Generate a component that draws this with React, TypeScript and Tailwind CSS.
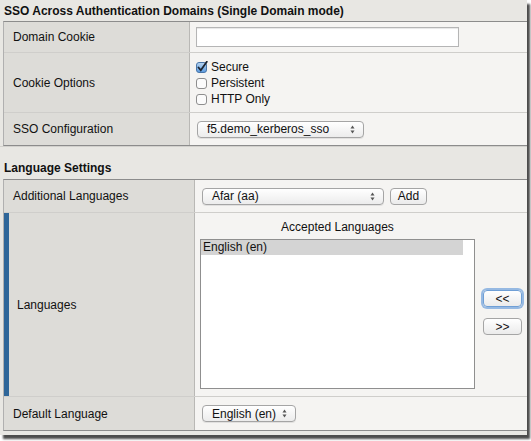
// Purpose: SSO / Language Settings admin panel (F5 style form).

function Arrows() {
  return (
    <svg width="5" height="9" viewBox="0 0 5 9" className="shrink-0">
      <path d="M2.5 0.5 L4.5 3.5 L0.5 3.5 Z" fill="#555" />
      <path d="M2.5 8.5 L4.5 5.5 L0.5 5.5 Z" fill="#555" />
    </svg>
  )
}

function Select({ label, width }: { label: string; width: string }) {
  return (
    <div
      className={`${width} h-[17px] flex items-center justify-between pl-[9px] pr-[8px] rounded-[4px] border border-[#a5a5a5] bg-gradient-to-b from-white to-[#ececec] shadow-[0_1px_0_rgba(0,0,0,0.08)] text-[12px] text-[#111] leading-none`}
    >
      <span>{label}</span>
      <Arrows />
    </div>
  )
}

function Button({ label, focused, width }: { label: string; focused?: boolean; width: string }) {
  return (
    <div
      className={`${width} h-[17px] flex items-center justify-center rounded-[4px] border bg-gradient-to-b from-white to-[#ebebeb] text-[12px] text-[#111] leading-none ${
        focused
          ? 'border-[#6f9fd6] shadow-[0_0_0_2px_rgba(110,160,220,0.7)]'
          : 'border-[#a5a5a5]'
      }`}
    >
      {label}
    </div>
  )
}

function Checkbox({ label, checked }: { label: string; checked?: boolean }) {
  return (
    <div className="flex items-center h-[16px] gap-[3px]">
      {checked ? (
        <svg width="12" height="12" viewBox="0 0 12 12">
          <defs>
            <linearGradient id="cb" x1="0" y1="0" x2="0" y2="1">
              <stop offset="0" stopColor="#b9d6f2" />
              <stop offset="1" stopColor="#5b9be0" />
            </linearGradient>
          </defs>
          <rect x="0.5" y="1.5" width="10" height="10" rx="2.5" fill="url(#cb)" stroke="#4a76a8" />
          <path d="M2.5 6.5 L4.8 9.3 L10.8 0.8" stroke="#1c2430" strokeWidth="1.8" fill="none" strokeLinecap="round" />
        </svg>
      ) : (
        <svg width="12" height="12" viewBox="0 0 12 12">
          <rect x="0.5" y="1.5" width="10" height="10" rx="2.5" fill="#fbfbfb" stroke="#8e8e8e" />
        </svg>
      )}
      <span className="text-[12px] text-[#111]">{label}</span>
    </div>
  )
}

function Row({
  label,
  labelW,
  h,
  children,
  marker,
  last,
}: {
  label: string
  labelW: string
  h: string
  children: React.ReactNode
  marker?: boolean
  last?: boolean
}) {
  return (
    <div className={`flex ${h} ${last ? '' : 'border-b border-[#cfcecb]'}`}>
      <div className={`${labelW} shrink-0 flex bg-[#dddcd8] border-r border-[#b9b8b5]`}>
        {marker && <div className="w-[5px] bg-[#2f6699]" />}
        <div className={`flex items-center text-[12px] text-[#111] ${marker ? 'pl-[8px]' : 'pl-[9px]'}`}>{label}</div>
      </div>
      <div className="flex-1 bg-[#f5f4f2]">{children}</div>
    </div>
  )
}

export default function App() {
  return (
    <div className="w-[531px] h-[441px] bg-white" style={{ fontFamily: '"Liberation Sans", Arial, sans-serif' }}>
      <div className="w-[527px] h-[435px] bg-[#e8e7e3] shadow-[3px_4px_2px_rgba(0,0,0,0.7)] flex flex-col">
        <h2 className="h-[21px] pl-[4px] pt-[4px] text-[12px] font-bold text-[#111] leading-[14px]">
          SSO Across Authentication Domains (Single Domain mode)
        </h2>
        <div className="ml-[3px] border-t border-b border-[#8c8c8c] border-l border-l-[#b0b0b0]">
          <Row label="Domain Cookie" labelW="w-[186px]" h="h-[31px]">
            <div className="h-full flex items-center pl-[6px]">
              <div className="w-[263px] h-[20px] bg-white border border-[#b5b5b5] shadow-[inset_0_1px_1px_rgba(0,0,0,0.1)]" />
            </div>
          </Row>
          <Row label="Cookie Options" labelW="w-[186px]" h="h-[60px]">
            <div className="pl-[6px] pt-[6px] flex flex-col">
              <Checkbox label="Secure" checked />
              <Checkbox label="Persistent" />
              <Checkbox label="HTTP Only" />
            </div>
          </Row>
          <Row label="SSO Configuration" labelW="w-[186px]" h="h-[32px]" last>
            <div className="h-full flex items-center pl-[7px]">
              <Select label="f5.demo_kerberos_sso" width="w-[167px]" />
            </div>
          </Row>
        </div>
        <div className="h-[33px] border-t border-[#d2d1cd] flex items-end pl-[4px] pb-[1px]">
          <h2 className="text-[12px] font-bold text-[#111] leading-[14px] pb-[3px]">Language Settings</h2>
        </div>
        <div className="ml-[3px] border-t border-b border-[#8c8c8c] border-l border-l-[#b0b0b0]">
          <Row label="Additional Languages" labelW="w-[191px]" h="h-[33px]">
            <div className="h-full flex items-center pl-[7px] gap-[6px]">
              <Select label="Afar (aa)" width="w-[182px]" />
              <Button label="Add" width="w-[37px]" />
            </div>
          </Row>
          <Row label="Languages" labelW="w-[191px]" h="h-[184px]" marker>
            <div className="flex h-full">
              <div className="flex flex-col pl-[5px] pt-[7px]">
                <div className="w-[275px] text-center text-[12px] text-[#111] leading-[14px] mb-[5px]">
                  Accepted Languages
                </div>
                <div className="w-[275px] h-[150px] bg-white border border-[#8f8f8f] flex">
                  <div className="flex-1">
                    <div className="h-[15px] bg-[#d4d4d4] pl-[2px] text-[12px] text-[#111] leading-[15px]">
                      English (en)
                    </div>
                  </div>
                  <div className="w-[11px] bg-white" />
                </div>
              </div>
              <div className="flex flex-col pl-[8px] pt-[77px] gap-[11px]">
                <Button label="<<" width="w-[39px]" focused />
                <Button label=">>" width="w-[39px]" />
              </div>
            </div>
          </Row>
          <Row label="Default Language" labelW="w-[191px]" h="h-[33px]" last>
            <div className="h-full flex items-center pl-[7px]">
              <Select label="English (en)" width="w-[94px]" />
            </div>
          </Row>
        </div>
      </div>
    </div>
  )
}
